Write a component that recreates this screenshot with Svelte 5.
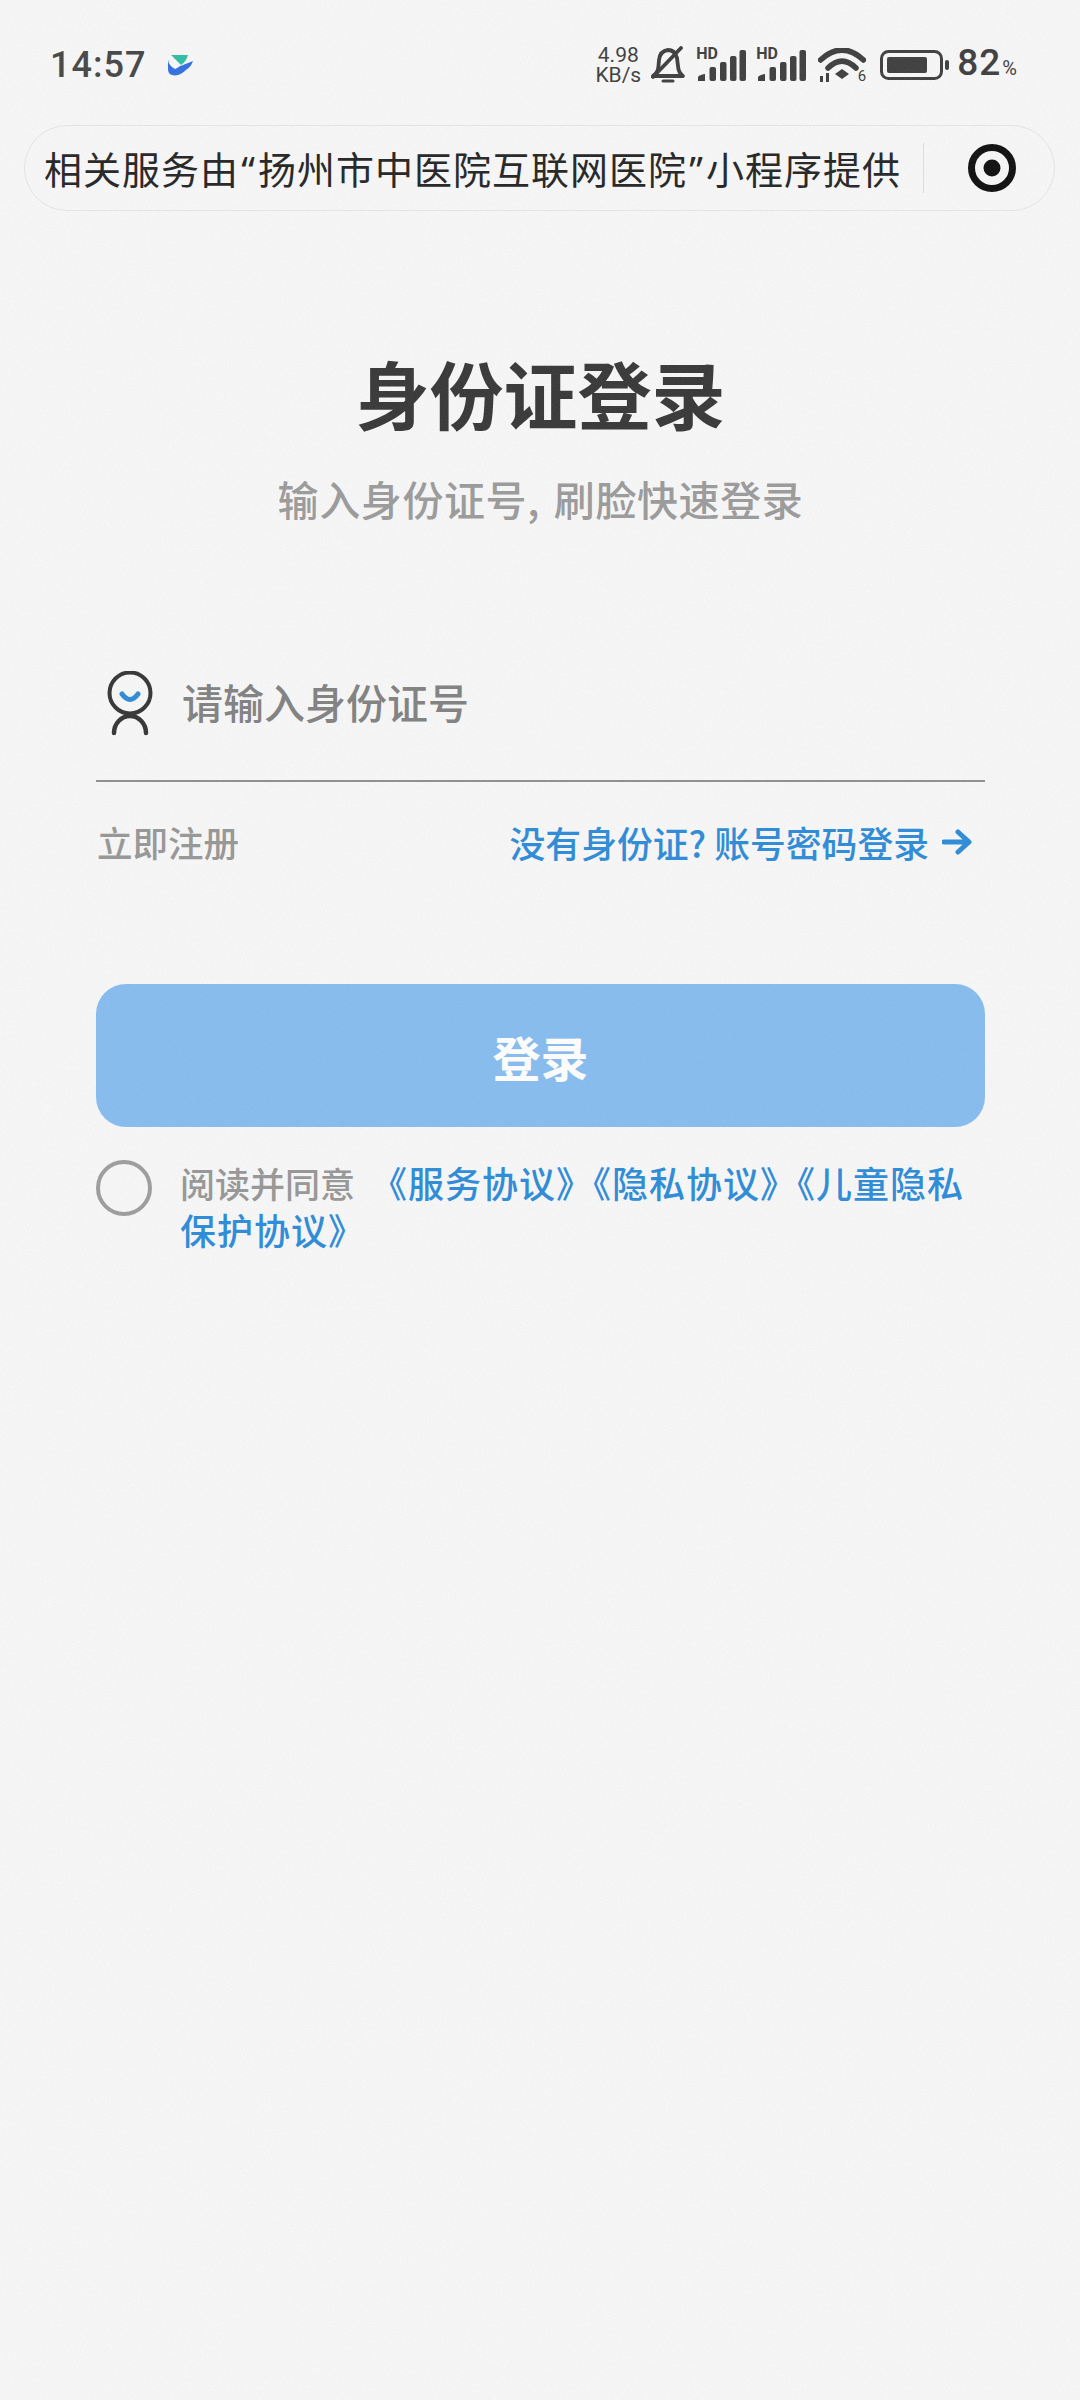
<script>
	// Login page: id card number plus face check
	let idNumber = $state('');
	let agreed = $state(false);
</script>

<div class="page">
	<header class="status">
		<div class="status-left">
			<span class="time">14:57</span>
			<svg class="app-logo" viewBox="0 0 26 22" aria-hidden="true">
				<path d="M4 1 L21 1 Q19 8 14 11 Z" fill="#2bbfa4" />
				<path d="M1 6 L11 13 L26 7 Q24 13 19 16 Q12 23 5 21 Q1 20 1 15 Z" fill="#2f6fe0" />
				<path d="M1 6 L12 13 L8 15 Q2 12 1 6 Z" fill="#ffffff" />
			</svg>
		</div>
		<div class="status-right">
			<div class="speed"><span>4.98</span><span>KB/s</span></div>
			<svg class="bell" viewBox="0 0 36 38" aria-hidden="true">
				<path d="M3 30 Q8 27 8.500 20 L9 14 Q10 5 18 4 Q25 4 27 12 L28 20 Q28.500 27 33 30 Z" fill="none" stroke="#3c3c3c" stroke-width="3.800" stroke-linejoin="round" />
				<path d="M13 35 H23" stroke="#3c3c3c" stroke-width="3" stroke-linecap="round" />
				<path d="M3 31 L31 2" stroke="#3c3c3c" stroke-width="3.800" stroke-linecap="round" />
			</svg>
			{#each [0, 1] as sim (sim)}
				<div class="signal">
					<span class="hd">HD</span>
					<svg viewBox="0 0 48 32" aria-hidden="true">
						<path d="M0 31 V27 Q1 25 7 24 V31 Z" fill="#3c3c3c" />
						<rect x="11.500" y="17" width="6.500" height="14" rx="2" fill="#3c3c3c" />
						<rect x="22" y="12" width="6.500" height="19" rx="2" fill="#3c3c3c" />
						<rect x="32" y="6" width="6.500" height="25" rx="2" fill="#3c3c3c" />
						<rect x="41.500" y="0" width="6.500" height="31" rx="2" fill="#3c3c3c" />
					</svg>
				</div>
			{/each}
			<div class="wifi">
				<svg viewBox="0 0 48 34" aria-hidden="true">
					<path d="M2.500 12 Q24 -8 45.500 12" fill="none" stroke="#3c3c3c" stroke-width="5.500" stroke-linecap="round" />
					<path d="M10 20 Q24 6 38 20" fill="none" stroke="#3c3c3c" stroke-width="5.500" stroke-linecap="round" />
					<path d="M17 26 L24 21 L31 26 L24 31 Z" fill="#3c3c3c" />
					<path d="M2 28 H5 V34 H2 Z M8 25 H11 V34 H8 Z" fill="#3c3c3c" />
				</svg>
				<span class="wifi-num">6</span>
			</div>
			<svg class="battery" viewBox="0 0 69 30" aria-hidden="true">
				<rect x="1.500" y="1.500" width="60" height="27" rx="7" fill="none" stroke="#3c3c3c" stroke-width="3" />
				<rect x="7" y="7" width="40" height="16" rx="2" fill="#3c3c3c" />
				<rect x="65" y="10" width="4" height="10" rx="2" fill="#3c3c3c" />
			</svg>
			<div class="level">82<small>%</small></div>
		</div>
	</header>

	<div class="capsule">
		<p class="capsule-text">相关服务由<span class="quote">“</span>扬州市中医院互联网医院<span class="quote">”</span>小程序提供</p>
		<span class="capsule-divider"></span>
		<button type="button" class="capsule-btn" aria-label="关闭小程序">
			<svg viewBox="0 0 50 50" aria-hidden="true">
				<circle cx="25" cy="25" r="20.500" fill="none" stroke="#0c0c0c" stroke-width="7" />
				<circle cx="25" cy="25" r="8.500" fill="#0c0c0c" />
			</svg>
		</button>
	</div>

	<main class="content">
		<h1>身份证登录</h1>
		<p class="subtitle">输入身份证号, 刷脸快速登录</p>

		<label class="field">
			<svg class="field-icon" viewBox="0 0 46 66" aria-hidden="true">
				<circle cx="23" cy="22" r="20.500" fill="none" stroke="#333" stroke-width="4" />
				<path d="M15 23 Q23 34 31 23" fill="none" stroke="#2a8ad8" stroke-width="5" stroke-linecap="round" />
				<path d="M7 62 A16 17 0 0 1 39 62" fill="none" stroke="#333" stroke-width="4.500" stroke-linecap="round" />
			</svg>
			<input type="text" placeholder="请输入身份证号" bind:value={idNumber} />
		</label>

		<div class="links">
			<a href="#register" class="register">立即注册</a>
			<a href="#password" class="password">
				没有身份证? 账号密码登录
				<svg viewBox="0 0 30 26" aria-hidden="true">
					<path d="M2 13 H26 M16 3 L27 13 L16 23" fill="none" stroke="#2a8ad8" stroke-width="5" stroke-linecap="round" stroke-linejoin="round" />
				</svg>
			</a>
		</div>

		<button type="button" class="submit">登录</button>

		<div class="agreement">
			<button type="button" class="check" class:agreed aria-label="同意协议" onclick={() => (agreed = !agreed)}></button>
			<p>阅读并同意<a href="#terms">《服务协议》《隐私协议》《儿童隐私保护协议》</a></p>
		</div>
	</main>

	<svg class="grain" aria-hidden="true">
		<filter id="grain-noise">
			<feTurbulence type="fractalNoise" baseFrequency="0.7" numOctaves="2" seed="4" />
			<feColorMatrix type="saturate" values="0" />
		</filter>
		<rect width="100%" height="100%" filter="url(#grain-noise)" />
	</svg>
</div>

<style>
	:global(body) {
		margin: 0;
		background: #f8f8f8;
	}

	.page {
		position: relative;
		height: 2400px;
		overflow: hidden;
		background: #f8f8f8;
		font-family: "Noto Sans CJK SC", "Noto Sans", sans-serif;
		color: #333;
	}

	.grain {
		position: absolute;
		inset: 0;
		width: 100%;
		height: 100%;
		opacity: 0.11;
		pointer-events: none;
	}

	.status {
		display: flex;
		align-items: center;
		justify-content: space-between;
		height: 125px;
		padding: 5px 62px 0 50px;
		box-sizing: border-box;
	}

	.status-left {
		display: flex;
		align-items: center;
		gap: 21px;
	}

	.time {
		font-family: Roboto, sans-serif;
		font-size: 36px;
		font-weight: 500;
		letter-spacing: 1px;
		color: #444;
	}

	.app-logo {
		width: 26px;
		height: 22px;
	}

	.status-right {
		display: flex;
		align-items: center;
		color: #3c3c3c;
	}

	.speed {
		display: flex;
		flex-direction: column;
		align-items: center;
		width: 46px;
		margin-right: 9px;
		font-family: Roboto, sans-serif;
		font-size: 21px;
		line-height: 20px;
	}

	.bell {
		width: 36px;
		height: 38px;
		margin-right: 10px;
	}

	.signal {
		position: relative;
		width: 50px;
		height: 34px;
		margin-right: 10px;
	}

	.signal svg {
		position: absolute;
		right: 0;
		bottom: 0;
		width: 48px;
		height: 32px;
	}

	.hd {
		position: absolute;
		left: 0;
		top: -2px;
		font-family: Roboto, sans-serif;
		font-size: 16px;
		font-weight: 700;
		line-height: 16px;
	}

	.wifi {
		position: relative;
		width: 48px;
		height: 34px;
		margin: 0 14px 0 2px;
	}

	.wifi svg {
		display: block;
		width: 48px;
		height: 34px;
	}

	.wifi-num {
		position: absolute;
		right: 0;
		bottom: -2px;
		font-family: Roboto, sans-serif;
		font-size: 15px;
		line-height: 15px;
	}

	.battery {
		width: 69px;
		height: 30px;
		margin-right: 8px;
	}

	.level {
		font-family: Roboto, sans-serif;
		font-size: 37px;
		font-weight: 500;
		letter-spacing: 1px;
		line-height: 40px;
	}

	.level small {
		font-size: 20px;
		font-weight: 400;
		margin-left: 1px;
	}

	.capsule {
		display: flex;
		align-items: center;
		width: 1031px;
		height: 86px;
		margin-left: 24px;
		padding-left: 19px;
		box-sizing: border-box;
		border: 1px solid #e6e6e6;
		border-radius: 43px;
	}

	.capsule-text {
		flex: none;
		width: 879px;
		margin: 0;
		font-size: 38px;
		line-height: 50px;
		letter-spacing: 1px;
		white-space: nowrap;
		color: #222;
	}

	.quote {
		display: inline-block;
		width: 19px;
		text-align: center;
		font-family: "Noto Sans", sans-serif;
	}

	.capsule-divider {
		width: 1px;
		height: 50px;
		background: #dedede;
	}

	.capsule-btn {
		display: flex;
		margin-left: 43px;
		padding: 0;
		border: none;
		background: none;
	}

	.capsule-btn svg {
		width: 50px;
		height: 50px;
	}

	.content {
		display: flex;
		flex-direction: column;
		padding: 0 95px 0 96px;
	}

	h1 {
		margin: 131px 0 0;
		font-size: 74px;
		font-weight: 700;
		line-height: 100px;
		text-align: center;
		color: #353535;
	}

	.subtitle {
		margin: 28px 0 0;
		font-size: 41px;
		font-weight: 500;
		line-height: 56px;
		letter-spacing: 0.6px;
		word-spacing: 4px;
		text-align: center;
		color: #9a9a9a;
	}

	.field {
		display: flex;
		align-items: center;
		gap: 29px;
		height: 122px;
		margin-top: 114px;
		padding: 0 0 18px 11px;
		border-bottom: 2px solid #8e8e8e;
	}

	.field-icon {
		flex: none;
		width: 46px;
		height: 66px;
		margin-top: 6px;
	}

	.field input {
		flex: 1;
		min-width: 0;
		padding: 0;
		border: none;
		outline: none;
		background: none;
		font-family: inherit;
		font-size: 41px;
		font-weight: 500;
		color: #333;
	}

	.field input::placeholder {
		color: #808080;
		opacity: 1;
	}

	.links {
		display: flex;
		align-items: center;
		justify-content: space-between;
		margin-top: 35px;
		padding: 0 13px 0 1px;
		line-height: 50px;
	}

	.links a {
		text-decoration: none;
	}

	.register {
		font-size: 35.500px;
		font-weight: 500;
		color: #969696;
	}

	.password {
		display: flex;
		align-items: center;
		gap: 13px;
		font-size: 35.800px;
		font-weight: 500;
		color: #2a8ad8;
	}

	.password svg {
		width: 30px;
		height: 26px;
	}

	.submit {
		height: 143px;
		margin-top: 117px;
		border: none;
		border-radius: 30px;
		background: #85bcf0;
		font-family: inherit;
		font-size: 48px;
		font-weight: 700;
		color: #fff;
	}

	.agreement {
		display: flex;
		align-items: flex-start;
		gap: 28px;
		margin-top: 33px;
	}

	.check {
		flex: none;
		width: 56px;
		height: 56px;
		padding: 0;
		border: 4px solid #9c9c9c;
		border-radius: 50%;
		background: none;
	}

	.check.agreed {
		background: #2a8ad8;
		border-color: #2a8ad8;
	}

	.agreement p {
		margin: -1px 0 0;
		font-size: 35px;
		font-weight: 500;
		line-height: 47px;
		color: #969696;
	}

	.agreement a {
		margin-left: 16px;
		font-size: 36px;
		letter-spacing: 1px;
		color: #2a8ad8;
		text-decoration: none;
	}
</style>
